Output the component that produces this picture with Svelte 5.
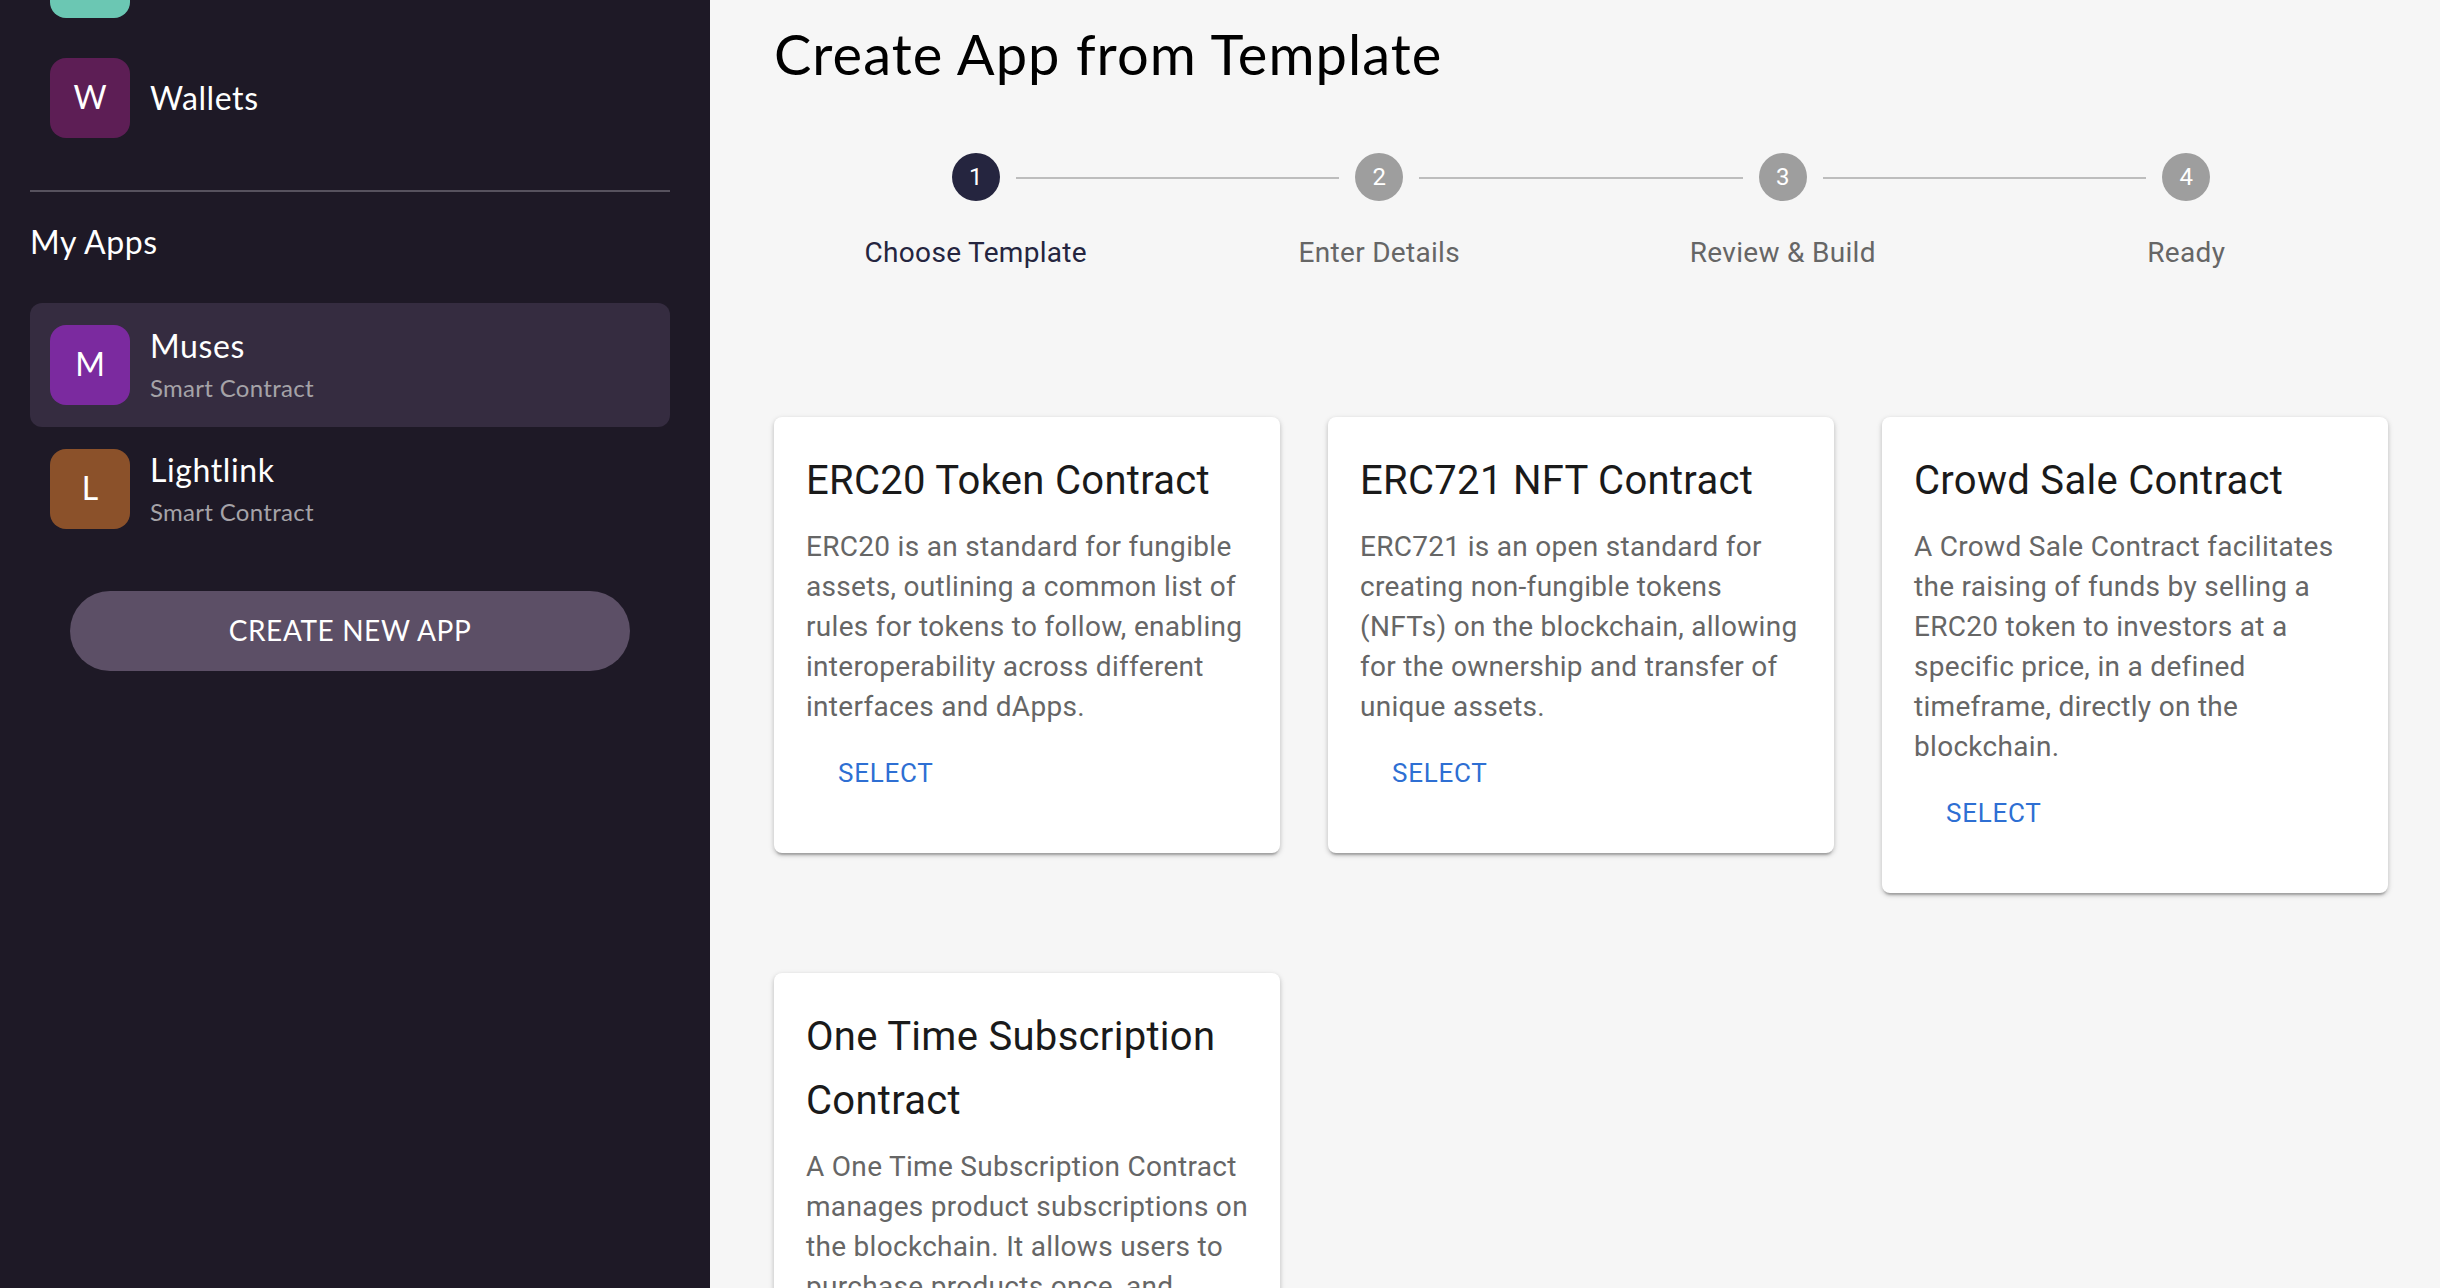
<script lang="ts">
	type Template = { title: string; body: string }

	const steps = ['Choose Template', 'Enter Details', 'Review & Build', 'Ready']

	const apps = [
		{ letter: 'M', name: 'Muses', color: '#7b2a9f', active: true },
		{ letter: 'L', name: 'Lightlink', color: '#8b512a', active: false }
	]

	const templates: Template[] = [
		{
			title: 'ERC20 Token Contract',
			body: 'ERC20 is an standard for fungible assets, outlining a common list of rules for tokens to follow, enabling interoperability across different interfaces and dApps.'
		},
		{
			title: 'ERC721 NFT Contract',
			body: 'ERC721 is an open standard for creating non-fungible tokens (NFTs) on the blockchain, allowing for the ownership and transfer of unique assets.'
		},
		{
			title: 'Crowd Sale Contract',
			body: 'A Crowd Sale Contract facilitates the raising of funds by selling a ERC20 token to investors at a specific price, in a defined timeframe, directly on the blockchain.'
		},
		{
			title: 'One Time Subscription Contract',
			body: 'A One Time Subscription Contract manages product subscriptions on the blockchain. It allows users to purchase products once, and access them for a fixed period of time.'
		}
	]
</script>

<div class="page">
	<aside class="sidebar">
		<div class="nav-item nav-item--cut">
			<div class="avatar avatar--teal"></div>
		</div>
		<div class="nav-item">
			<div class="avatar avatar--wallet">W</div>
			<span class="nav-item__name">Wallets</span>
		</div>
		<div class="divider"></div>
		<h2 class="section-title">My Apps</h2>
		{#each apps as app (app.name)}
			<div class="app-item" class:app-item--active={app.active}>
				<div class="avatar" style="background: {app.color}">{app.letter}</div>
				<div class="app-item__text">
					<span class="nav-item__name">{app.name}</span>
					<span class="app-item__sub">Smart Contract</span>
				</div>
			</div>
		{/each}
		<button class="create-btn">CREATE NEW APP</button>
	</aside>

	<main class="main">
		<h1 class="title">Create App from Template</h1>

		<ol class="stepper">
			{#each steps as step, i (step)}
				<li class="step">
					{#if i > 0}<div class="step__line"></div>{/if}
					<div class="step__node" class:step__node--active={i === 0}>{i + 1}</div>
					<span class="step__label" class:step__label--active={i === 0}>{step}</span>
				</li>
			{/each}
		</ol>

		<div class="cards">
			{#each templates as t (t.title)}
				<article class="card">
					<h3 class="card__title">{t.title}</h3>
					<p class="card__body">{t.body}</p>
					<div class="card__actions">
						<button class="select-btn">SELECT</button>
					</div>
				</article>
			{/each}
		</div>
	</main>
</div>

<style>
	:global(body) {
		margin: 0;
		overflow: hidden;
	}

	.page {
		display: flex;
		width: 2440px;
		height: 1288px;
		overflow: hidden;
		background: #f6f6f6;
	}

	.sidebar {
		flex: 0 0 710px;
		box-sizing: border-box;
		padding: 0 40px 0 30px;
		background: #1e1926;
		color: #fff;
		font-family: Lato, 'Noto Sans', sans-serif;
		height: 1288px;
		overflow: hidden;
	}

	.nav-item {
		display: flex;
		align-items: center;
		gap: 20px;
		height: 120px;
		padding: 0 20px;
	}

	.nav-item--cut {
		height: 38px;
		align-items: flex-start;
	}

	.avatar {
		flex: 0 0 80px;
		box-sizing: border-box;
		width: 80px;
		height: 80px;
		padding-bottom: 3px;
		border-radius: 16px;
		display: flex;
		align-items: center;
		justify-content: center;
		font-size: 32px;
		color: #fff;
	}

	.avatar--teal {
		height: 18px;
		padding: 0;
		border-radius: 0 0 16px 16px;
		background: #6bc7b3;
	}

	.avatar--wallet {
		background: #5d1e55;
	}

	.nav-item__name {
		font-size: 32px;
		line-height: 44px;
		letter-spacing: 0.6px;
	}

	.divider {
		height: 2px;
		margin-top: 32px;
		background: #57525e;
	}

	.section-title {
		margin: 28px 0 39px;
		font-size: 32px;
		line-height: 44px;
		font-weight: 400;
		letter-spacing: 0.6px;
	}

	.app-item {
		display: flex;
		align-items: center;
		gap: 20px;
		height: 124px;
		padding: 0 20px;
		border-radius: 12px;
	}

	.app-item--active {
		background: #352c40;
	}

	.app-item__text {
		display: flex;
		flex-direction: column;
		gap: 4px;
		margin-top: -2px;
	}

	.app-item__sub {
		font-size: 24px;
		line-height: 32px;
		letter-spacing: 0.3px;
		color: #a5a3a8;
	}

	.create-btn {
		display: block;
		width: 560px;
		height: 80px;
		margin: 40px 0 0 40px;
		padding: 0 0 3px;
		border: 0;
		border-radius: 40px;
		background: #5c4f66;
		color: #fff;
		font-family: inherit;
		font-size: 28px;
		letter-spacing: 0.6px;
	}

	.main {
		flex: 1;
		box-sizing: border-box;
		padding: 0 52px 0 64px;
		height: 1288px;
		overflow: hidden;
	}

	.title {
		margin: 21px 0 0;
		font-family: Lato, 'Noto Sans', sans-serif;
		font-size: 56px;
		line-height: 66px;
		font-weight: 400;
		letter-spacing: 1.05px;
		color: #000;
	}

	.stepper {
		list-style: none;
		display: grid;
		grid-template-columns: repeat(4, 1fr);
		margin: 66px 0 0;
		padding: 0;
		font-family: Roboto, sans-serif;
	}

	.step {
		position: relative;
		display: flex;
		flex-direction: column;
		align-items: center;
		gap: 32px;
	}

	.step__line {
		position: absolute;
		top: 24px;
		right: calc(50% + 40px);
		left: calc(-50% + 40px);
		height: 2px;
		background: #bdbdbd;
	}

	.step__node {
		width: 48px;
		height: 48px;
		border-radius: 50%;
		background: #9e9e9e;
		color: #fff;
		font-size: 24px;
		line-height: 48px;
		text-align: center;
	}

	.step__node--active {
		background: #25253f;
	}

	.step__label {
		font-size: 28px;
		line-height: 40px;
		letter-spacing: 0.3px;
		color: #666;
	}

	.step__label--active {
		color: #25253f;
	}

	.cards {
		display: grid;
		grid-template-columns: repeat(3, 506px);
		column-gap: 48px;
		row-gap: 80px;
		align-items: start;
		margin-top: 144px;
		font-family: Roboto, sans-serif;
	}

	.card {
		box-sizing: border-box;
		padding: 32px;
		border-radius: 8px;
		background: #fff;
		box-shadow: 0 4px 2px -2px rgba(0, 0, 0, 0.2), 0 2px 4px 0 rgba(0, 0, 0, 0.14), 0 2px 6px 0 rgba(0, 0, 0, 0.12);
	}

	.card__title {
		margin: 0 0 14px;
		font-size: 40px;
		line-height: 64px;
		font-weight: 400;
		letter-spacing: 0.3px;
		color: #1a1a1a;
	}

	.card__body {
		margin: 0;
		font-size: 28px;
		line-height: 40px;
		letter-spacing: 0.3px;
		color: #666;
	}

	.card__actions {
		padding: 15px 16px 18px;
	}

	.select-btn {
		display: block;
		height: 61px;
		padding: 0 16px;
		margin: 0;
		border: 0;
		background: none;
		color: #2e6fd3;
		font-family: inherit;
		font-size: 26px;
		letter-spacing: 0.74px;
	}
</style>
